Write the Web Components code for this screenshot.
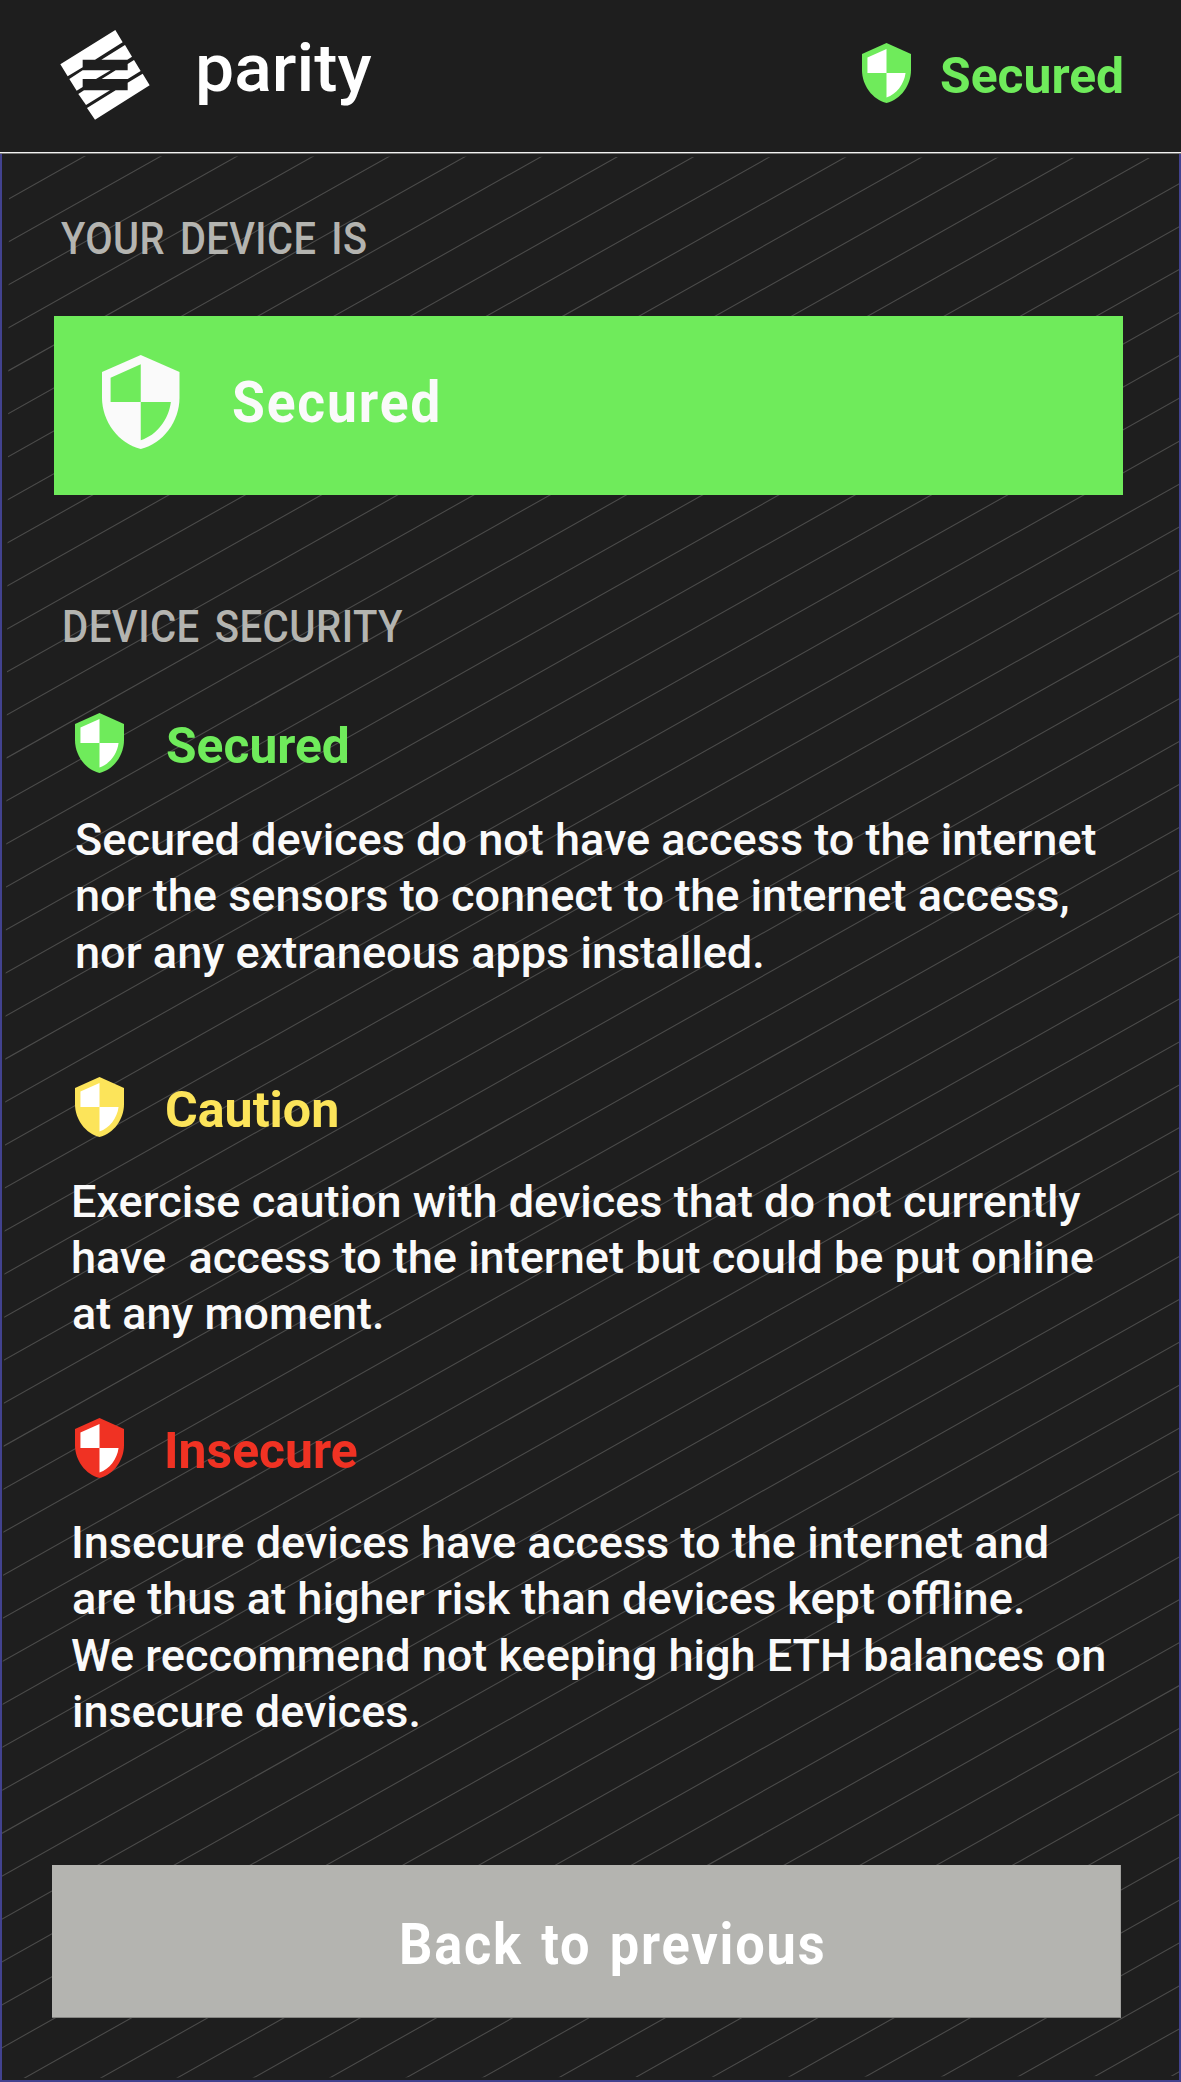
<!DOCTYPE html>
<html lang="en">
<head>
<meta charset="utf-8">
<title>Parity – Device security</title>
<style>
html,body{margin:0;background:#1e1e1e}
body{font-family:Roboto,"Liberation Sans",sans-serif}
</style>
</head>
<body>
<device-screen></device-screen>
<script>
const define=(name,html,setup)=>customElements.define(name,class extends HTMLElement{
  connectedCallback(){
    if(this.shadowRoot)return;
    const t=document.createElement('template');
    t.innerHTML=html;
    this.attachShadow({mode:'open'}).append(t.content.cloneNode(true));
    if(setup)setup(this,this.shadowRoot);
  }
});

/* One line of type, stretched so its ink spans from start to end inside the host. */
define('fit-line',`<style>
:host{display:block;white-space:pre;font-kerning:normal}
span{display:inline-block;transform-origin:0 50%;white-space:pre}
</style><span><slot></slot></span>`,(host,root)=>{
  const span=root.querySelector('span'),cs=getComputedStyle(host);
  const c=document.createElement('canvas').getContext('2d');
  c.font=cs.fontWeight+' '+cs.fontSize+' '+cs.fontFamily;
  if(cs.letterSpacing!=='normal')c.letterSpacing=cs.letterSpacing;
  if(cs.wordSpacing!=='normal')c.wordSpacing=cs.wordSpacing;
  const m=c.measureText(host.textContent);
  const ink=m.actualBoundingBoxLeft+m.actualBoundingBoxRight;
  const start=+host.getAttribute('start')||0,end=+host.getAttribute('end');
  const s=(end-start)/ink;
  span.style.transform='scaleX('+s+')';
  span.style.marginLeft=(start+m.actualBoundingBoxLeft*s)+'px';
  span.style.width=m.width+'px';
  span.style.marginRight=-(m.width+100)+'px';
});

define('shield-icon',`<style>
:host{display:block;flex:none;width:49px;height:60px}
svg{display:block;width:100%;height:100%}
</style><svg viewBox="3 1 18 22" preserveAspectRatio="none">
<path fill="var(--shield)" d="M12 1 3 5v6c0 5.55 3.84 10.74 9 12 5.16-1.26 9-6.45 9-12V5z"/>
<path fill="var(--field,#fff)" d="M12 12h7c-.53 4.12-3.28 7.79-7 8.94V12H5V6.3l7-3.11z"/></svg>`);

define('parity-logo',`<style>
:host{display:block;flex:none;width:90px;height:90px}
svg{display:block}
</style><svg width="90" height="90" viewBox="30 30 270 270" fill="#fff">
<path d="M31 133 196 30 218 67 135 119H98V142L53 169Z"/>
<path d="M225 75 246 110 232 119H154Z"/>
<path d="M58 177 98 151H182L138 177H98V201L80 212Z"/>
<path d="M233 132 252 120 272 153 233 177H155L197 151H233Z"/>
<path d="M85 222 102 211H180L108 255Z"/>
<path d="M111 264 197 211H233V188L278 161 299 196 135 299Z"/></svg>`);

define('app-header',`<style>
:host{display:flex;box-sizing:border-box;height:154px;padding:30px 0 0 60px;border-bottom:1px solid #777775;box-shadow:inset 0 -1px #f2f2f2;color:#fff}
.name{width:711.5px;font-size:66px;font-weight:500;line-height:78px}
shield-icon{--shield:#6feb5b;margin-top:13px}
.state{font-size:50px;font-weight:700;line-height:60px;color:#6feb5b;margin-top:15.5px}
</style><parity-logo></parity-logo>
<fit-line class="name" start="49.5" end="221.5">parity</fit-line>
<shield-icon></shield-icon>
<fit-line class="state" start="30.5" end="211.5">Secured</fit-line>`);

define('section-label',`<style>
:host{display:block;height:50px;font-size:44px;line-height:50px;font-weight:500;word-spacing:5px;letter-spacing:.5px;color:#b4b4b0}
</style><slot></slot>`);

define('status-banner',`<style>
:host{display:flex;align-items:center;box-sizing:border-box;width:1068.5px;height:179px;margin-left:52px;padding:0 0 6px 48px;background:#6feb5b;color:#fafafa}
shield-icon{width:77.5px;height:94px;--shield:#fafafa;--field:#6feb5b}
div{font-size:58px;font-weight:700;line-height:70px}
</style><shield-icon></shield-icon><div><slot></slot></div>`);

define('level-title',`<style>
:host{display:flex;height:60px;margin-left:73px;color:var(--shield)}
div{font-size:50px;line-height:60px;font-weight:700;padding-top:3px}
</style><shield-icon></shield-icon><div><slot></slot></div>`);

define('level-text',`<style>
:host{display:block;font-size:44.5px;line-height:56.4px;font-weight:500;color:#fafafa}
</style><slot></slot>`);

define('back-button',`<style>
:host{display:block;margin-left:50.3px}
button{display:block;box-sizing:border-box;width:1069px;height:153px;padding:5px 0 0;border:0;border-right:1px solid #a0a09d;border-bottom:1px solid #858582;background:#b4b4b0;color:#fff;font:700 58px/70px Roboto,sans-serif;text-align:left}
</style><button><slot></slot></button>`);

/* Diagonal hairlines; the field's left edge leans toward the frame at the bottom. */
define('hatched-panel',`<style>
:host{display:grid;box-sizing:border-box;height:1928px;border:solid #42428f;border-width:0 2px 2px}
svg,main{grid-area:1/1;min-width:0}
svg{display:block}
main{display:block;padding-top:60px;height:1866px}
</style><svg width="1177" height="1926" viewBox="2 154 1177 1926">
<clipPath id="field"><path d="M9.2 156 1181 158V2076L1 2078Z"/></clipPath>
<g clip-path="url(#field)"><path class="h" fill="none" stroke="#4b4b4a" stroke-width="1.1"/></g></svg>
<main><slot></slot></main>`,(host,root)=>{
  let d='';
  for(let k=0;k<60;k++){const y=203.8+42.91*k;d+='M0 '+y.toFixed(2)+'L1181 '+(y-1181*.5628).toFixed(2);}
  root.querySelector('.h').setAttribute('d',d);
});

define('device-screen',`<style>
:host{display:block;width:1181px;height:2082px;overflow:hidden}
.l2{margin-top:107px}
.t1{margin-top:61.5px;--shield:#6feb5b}.p1{margin-top:38.9px}
.t2{margin-top:95.9px;--shield:#fce45a}.p2{margin-top:36.6px}
.t3{margin-top:75.2px;--shield:#f03223}.p3{margin-top:37px}
status-banner{margin-top:51.5px}
back-button{margin-top:124.4px}
.btn{letter-spacing:2px;word-spacing:4px}
.ban{letter-spacing:2px}
</style>
<app-header></app-header>
<hatched-panel>
<section-label><fit-line start="59" end="364.5">YOUR DEVICE IS</fit-line></section-label>
<status-banner><fit-line class="ban" start="53" end="258">Secured</fit-line></status-banner>
<section-label class="l2"><fit-line start="63" end="401">DEVICE SECURITY</fit-line></section-label>
<level-title class="t1"><fit-line start="43.3" end="224">Secured</fit-line></level-title>
<level-text class="p1"><fit-line start="74" end="1093.7">Secured devices do not have access to the internet</fit-line><fit-line start="74.7" end="1065.3">nor the sensors to connect to the internet access,</fit-line><fit-line start="74.7" end="760">nor any extraneous apps installed.</fit-line></level-text>
<level-title class="t2"><fit-line start="43.3" end="213.5">Caution</fit-line></level-title>
<level-text class="p2"><fit-line start="72" end="1078.7">Exercise caution with devices that do not currently</fit-line><fit-line start="71.3" end="1091.3">have  access to the internet but could be put online</fit-line><fit-line start="71" end="380">at any moment.</fit-line></level-text>
<level-title class="t3"><fit-line start="43.3" end="233">Insecure</fit-line></level-title>
<level-text class="p3"><fit-line start="72" end="1045">Insecure devices have access to the internet and</fit-line><fit-line start="71" end="1021">are thus at higher risk than devices kept offline.</fit-line><fit-line start="70.3" end="1102.7">We reccommend not keeping high ETH balances on</fit-line><fit-line start="72" end="416.5">insecure devices.</fit-line></level-text>
<back-button><fit-line class="btn" start="349.3" end="770.5">Back to previous</fit-line></back-button>
</hatched-panel>`);
</script>
</body>
</html>
